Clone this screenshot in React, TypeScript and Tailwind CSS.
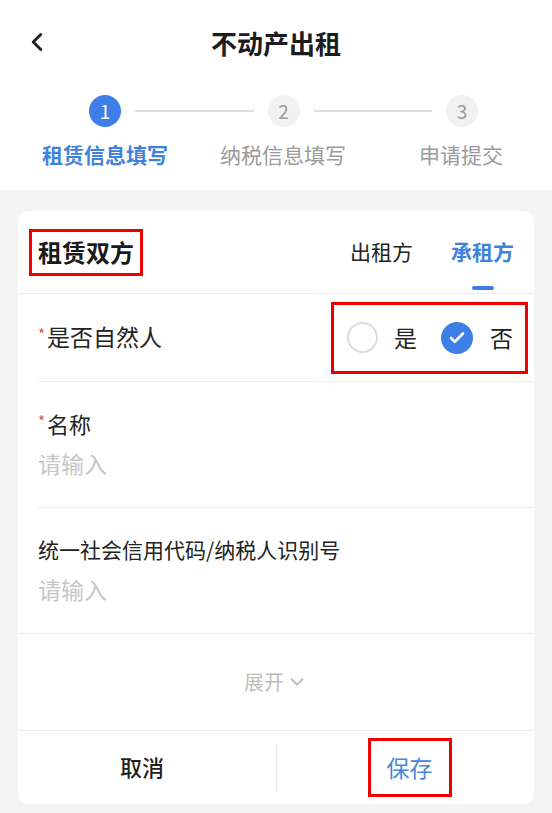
import { ChevronLeft, ChevronDown, Check } from 'lucide-react'

const font = { fontFamily: '"Noto Sans CJK SC", "Noto Sans", sans-serif' }

function Steps() {
  return (
    <div className="pt-[11px]">
      <div className="flex items-center pl-[89px] pr-[74px]">
        <div className="w-[32px] h-[32px] rounded-full bg-[#3d7fe6] text-white flex items-center justify-center text-[19px]">1</div>
        <div className="flex-1 mx-[14px] h-[1.5px] bg-[#dedede]" />
        <div className="w-[32px] h-[32px] rounded-full bg-[#f1f1f1] text-[#9a9a9a] flex items-center justify-center text-[19px]">2</div>
        <div className="flex-1 mx-[14px] h-[1.5px] bg-[#dedede]" />
        <div className="w-[32px] h-[32px] rounded-full bg-[#f1f1f1] text-[#9a9a9a] flex items-center justify-center text-[19px]">3</div>
      </div>
      <div className="flex pl-[16px] mt-[12px] text-[21px] leading-[30px]">
        <span className="w-[178px] text-center font-bold text-[#3f82dc]">租赁信息填写</span>
        <span className="w-[178px] text-center text-[#9a9a9a]">纳税信息填写</span>
        <span className="w-[178px] text-center text-[#9a9a9a]">申请提交</span>
      </div>
    </div>
  )
}

function Field({ label, required, inset = true }: { label: string; required?: boolean; inset?: boolean }) {
  return (
    <div className={`${inset ? 'ml-[20px]' : 'pl-[20px]'} border-b border-[#ececec] pt-[25px] pb-[28px]`}>
      <div className="flex items-start text-[21px] leading-[32px] text-[#222]">
        {required ? <span className="text-[#d9534f] text-[15px] leading-[20px] mr-[2px] mt-[4px]">*</span> : null}
        <span className={required ? 'text-[22px]' : ''}>{label}</span>
      </div>
      <div className="mt-[8px] text-[23px] leading-[32px] text-[#c6c6c6]">请输入</div>
    </div>
  )
}

export default function App() {
  return (
    <div style={font} className="w-[552px] h-[813px] bg-[#f4f4f4] overflow-hidden">
      <div className="bg-white pb-[5px]">
        <div className="relative h-[84px] flex items-center justify-center">
          <ChevronLeft className="absolute left-[22px] top-[27px] w-[30px] h-[30px] text-[#222]" strokeWidth={2.4} />
          <span className="text-[26px] font-bold text-[#1c1c1c]">不动产出租</span>
        </div>
        <Steps />
        <div className="h-[16px]" />
      </div>

      <div className="mx-[18px] mt-[21px] bg-white rounded-[10px] overflow-hidden">
        <div className="flex items-center justify-between h-[83px] pl-[11px] pr-[20px] border-b border-[#ececec]">
          <span className="border-[3px] border-[#ee0000] px-[6px] h-[47px] flex items-center text-[24px] font-bold text-[#1a1a1a]">租赁双方</span>
          <div className="flex items-center gap-[38px] text-[21px] self-stretch">
            <span className="text-[#222]">出租方</span>
            <span className="relative h-full flex items-center font-bold text-[#3f82dc]">
              承租方
              <span className="absolute bottom-[3px] left-1/2 -translate-x-1/2 w-[22px] h-[4px] rounded-full bg-[#3d7fe6]" />
            </span>
          </div>
        </div>

        <div className="ml-[20px] border-b border-[#ececec] h-[88px] flex items-center justify-between pr-[6px]">
          <div className="flex items-start text-[23px] leading-[34px] text-[#222] -mt-[4px]">
            <span className="text-[#d9534f] text-[15px] leading-[20px] mr-[2px] mt-[5px]">*</span>
            <span>是否自然人</span>
          </div>
          <div className="border-[3px] border-[#ee0000] h-[72px] w-[197px] flex items-center pl-[13px]">
            <span className="w-[31px] h-[31px] rounded-full border-2 border-[#dcdcdc]" />
            <span className="ml-[16px] text-[23px] text-[#222]">是</span>
            <span className="ml-[24px] w-[32px] h-[32px] rounded-full bg-[#3d7fe6] flex items-center justify-center">
              <Check className="w-[18px] h-[18px] text-white" strokeWidth={3.5} />
            </span>
            <span className="ml-[17px] text-[23px] text-[#222]">否</span>
          </div>
        </div>

        <Field label="名称" required />
        <Field label="统一社会信用代码/纳税人识别号" inset={false} />

        <div className="h-[97px] flex items-center justify-center border-b border-[#ececec] text-[#bdbdbd] text-[20px]">
          <span>展开</span>
          <ChevronDown className="w-[22px] h-[22px] ml-[2px]" strokeWidth={2} />
        </div>

        <div className="grid grid-cols-2 h-[73px] items-center">
          <div className="flex justify-center text-[22px] font-medium text-[#1f1f1f] pr-[10px] -mt-[3px]">取消</div>
          <div className="flex justify-center border-l border-[#ececec] h-[50px] items-center">
            <span className="border-[3px] border-[#ee0000] w-[84px] h-[59px] flex items-center justify-center text-[23px] text-[#4a86d6] ml-[8px]">保存</span>
          </div>
        </div>
      </div>
    </div>
  )
}
